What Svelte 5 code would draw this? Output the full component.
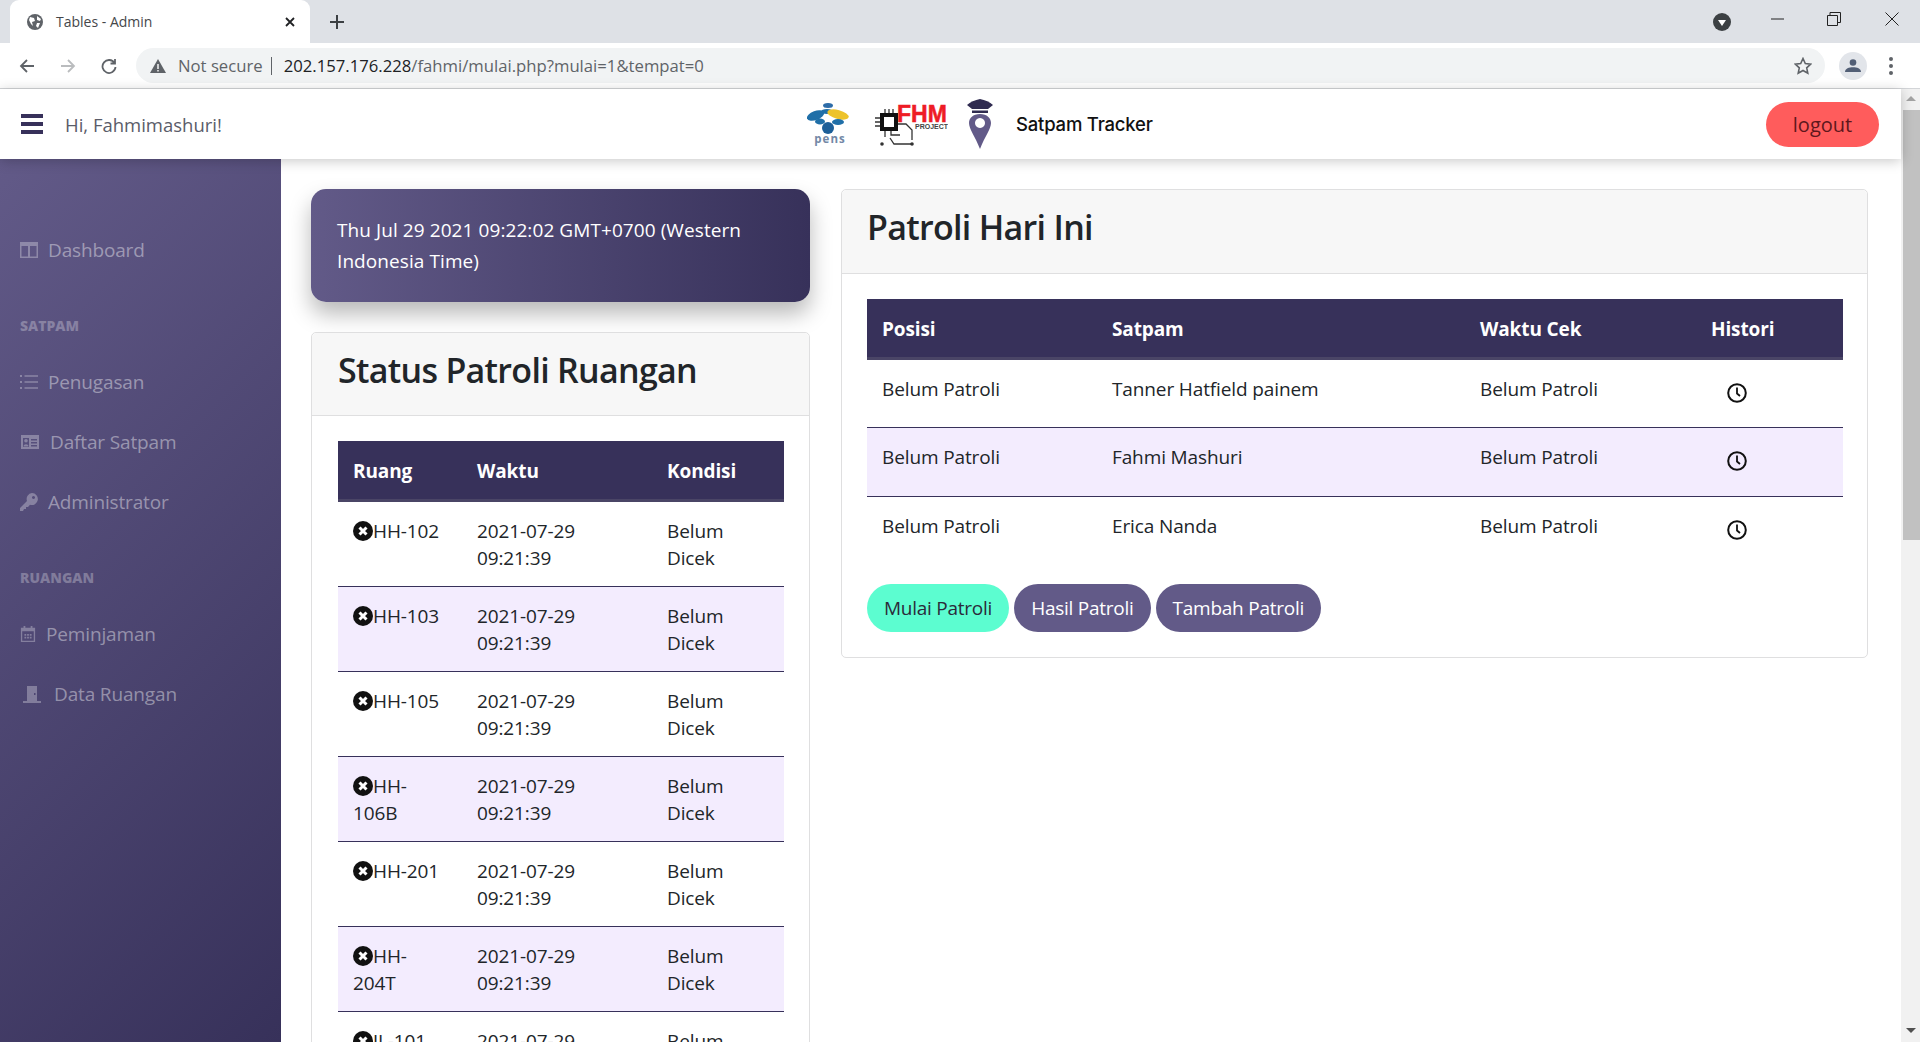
<script>
    const sideGroups = [
        { items: [{ icon: "board", label: "Dashboard" }] },
        { title: "SATPAM", items: [
            { icon: "list", label: "Penugasan" },
            { icon: "idcard", label: "Daftar Satpam" },
            { icon: "key", label: "Administrator" }
        ] },
        { title: "RUANGAN", items: [
            { icon: "cal", label: "Peminjaman" },
            { icon: "door", label: "Data Ruangan" }
        ] }
    ];

    const rooms = ["HH-102", "HH-103", "HH-105", "HH-106B", "HH-201", "HH-204T", "JL-101"];
    const patrols = ["Tanner Hatfield painem", "Fahmi Mashuri", "Erica Nanda"];
</script>

<div class="window">
    <div class="tabstrip">
        <div class="tab">
            <svg class="globe" viewBox="0 0 16 16"><circle cx="8" cy="8" r="8" fill="#5f6368"/><path d="M3 3l4 1 1 3-3 1 1 4-2-2-2-4zM10 2l4 3-1 2-3-1zM10 9l3 0-2 5-2-2z" fill="#fff"/></svg>
            <span class="tabtitle">Tables - Admin</span>
            <svg class="tabx" viewBox="0 0 12 12"><path d="M2 2l8 8M10 2l-8 8" stroke="#202124" stroke-width="1.8"/></svg>
        </div>
        <svg class="newtab" viewBox="0 0 16 16"><path d="M8 1v14M1 8h14" stroke="#3c4043" stroke-width="2"/></svg>
        <div class="spacer"></div>
        <svg class="dropdown" viewBox="0 0 18 18"><circle cx="9" cy="9" r="9" fill="#3c4043"/><path d="M5 7h8l-4 6z" fill="#fff"/></svg>
        <svg class="winbtn" viewBox="0 0 14 14"><path d="M0 7h13" stroke="#222" stroke-width="1"/></svg>
        <svg class="winbtn restore" viewBox="0 0 14 14"><path d="M.5 3.500h10v10H.5zM3 3.500V.5h10.500v10h-3" fill="none" stroke="#222"/></svg>
        <svg class="winbtn last" viewBox="0 0 14 14"><path d="M.5.500l13 13M13.500.500l-13 13" stroke="#222"/></svg>
    </div>
    <div class="toolbar">
        <svg class="navicon" viewBox="0 0 16 16"><path d="M15 8H2M8 2L2 8l6 6" fill="none" stroke="#5f6368" stroke-width="1.800"/></svg>
        <svg class="navicon" viewBox="0 0 16 16"><path d="M1 8h13M8 2l6 6-6 6" fill="none" stroke="#babcbe" stroke-width="1.800"/></svg>
        <svg class="navicon" viewBox="0 0 16 16"><path d="M13.500 5A6.500 6.500 0 1 0 14.500 9M14 1v4.500H9.500" fill="none" stroke="#5f6368" stroke-width="1.800"/></svg>
        <div class="omnibox">
            <svg class="warn" viewBox="0 0 16 14"><path d="M8 0l8 14H0z" fill="#5f6368"/><path d="M7.300 5h1.400v5H7.300zM7.300 11h1.400v1.500H7.300z" fill="#fff"/></svg>
            <span class="insecure">Not secure</span>
            <span class="divider"></span>
            <span class="url"><b>202.157.176.228</b>/fahmi/mulai.php?mulai=1&amp;tempat=0</span>
            <div class="spacer"></div>
            <svg class="star" viewBox="0 0 18 18"><path d="M9 1.500l2.300 5 5.400.6-4 3.700 1.100 5.400L9 13.500l-4.800 2.700 1.100-5.400-4-3.700 5.400-.6z" fill="none" stroke="#5f6368" stroke-width="1.600"/></svg>
        </div>
        <div class="avatar">
            <svg viewBox="0 0 16 16"><circle cx="8" cy="4.500" r="3.300" fill="#525f76"/><path d="M0 14c0-3.500 4-4.700 8-4.700s8 1.200 8 4.700z" fill="#525f76"/></svg>
        </div>
        <div class="kebab"><i></i><i></i><i></i></div>
    </div>

    <div class="viewport">
        <div class="page">
            <header class="topbar">
                <div class="greeting">
                    <div class="burger"><i></i><i></i><i></i></div>
                    <span class="hello">Hi, Fahmimashuri!</span>
                </div>
                <div class="brand">
                    <svg class="logo-pens" viewBox="0 0 43 43">
                        <ellipse cx="21" cy="2.500" rx="5" ry="2.500" fill="#2d6ca8"/>
                        <ellipse cx="8.500" cy="12.500" rx="9" ry="4.500" fill="#1f6fa8" transform="rotate(-20 8.500 12.500)"/>
                        <ellipse cx="20" cy="8.500" rx="6" ry="2.500" fill="#1f6fa8"/>
                        <ellipse cx="31" cy="11.500" rx="11" ry="4.500" fill="#edc32b" transform="rotate(15 31 11.500)"/>
                        <ellipse cx="13" cy="18.500" rx="5" ry="3" fill="#1f6fa8"/>
                        <ellipse cx="31" cy="19" rx="6" ry="3" fill="#1f6fa8"/>
                        <circle cx="21" cy="25" r="6" fill="#1d5f98"/>
                        <text x="23" y="39.500" class="pens-text">pens</text>
                    </svg>
                    <svg class="logo-fhm" viewBox="0 0 74 48">
                        <rect x="8" y="15" width="14" height="14" fill="none" stroke="#111" stroke-width="4"/>
                        <path d="M1 18h5M1 22h5M1 26h5M11 9v4M15 9v4M19 9v4M11 31v6M17 31v4h9M24 24h8l6 6v10M16 38l4 6h19" fill="none" stroke="#333" stroke-width="1.300"/>
                        <circle cx="8" cy="44" r="1.800" fill="#333"/>
                        <circle cx="38" cy="44" r="1.800" fill="#333"/>
                        <text x="23" y="22" class="fhm-text">FHM</text>
                        <text x="41" y="29" class="project-text">PROJECT</text>
                    </svg>
                    <svg class="logo-pin" viewBox="0 0 26 50">
                        <path d="M13 0C8 1 3 3 0 6l5 4h16l5-4C23 3 18 1 13 0z" fill="#2f2b50"/>
                        <path d="M5 11.500h16V14H5z" fill="#2f2b50"/>
                        <path fill-rule="evenodd" d="M13 15C6 15 2 19 2 24c0 6 6 13 11 26 5-13 11-20 11-26 0-5-4-9-11-9zM13 19a5 5 0 1 0 .01 0z" fill="#625a88"/>
                    </svg>
                    <span class="brand-name">Satpam Tracker</span>
                </div>
                <button class="logout">logout</button>
            </header>

            <div class="below">
                <aside class="sidebar">
                    {#each sideGroups as group}
                        {#if group.title}<div class="sidetitle">{group.title}</div>{/if}
                        {#each group.items as item}
                            <div class="sideitem">
                                <svg class="sideicon {item.icon}" viewBox="0 0 18 18">
                                    {#if item.icon === "board"}
                                        <path fill-rule="evenodd" d="M0 1h18v16H0zM1.500 5v10.500h6.500V5zM10 5v10.500h6.500V5z"/>
                                    {:else if item.icon === "list"}
                                        <path d="M0 2h2v2H0zM0 8h2v2H0zM0 14h2v2H0zM4.500 2.300H18v1.400H4.500zM4.500 8.300H18v1.400H4.500zM4.500 14.300H18v1.400H4.500z"/>
                                    {:else if item.icon === "idcard"}
                                        <path fill-rule="evenodd" d="M0 2h18v14H0zM2 5v9h6V5zM10 6v1.500h6V6zM10 9v1.500h6V9zM10 12v1.500h6V12z"/>
                                        <circle cx="5" cy="7.800" r="1.800"/><path d="M2.500 13.500c0-3 5-3 5 0z"/>
                                    {:else if item.icon === "key"}
                                        <path fill-rule="evenodd" d="M12 0a6 6 0 1 1-2 11.700L8 14H6v2H4l-1 2H0v-3l7-7A6 6 0 0 1 12 0zM13.500 3a1.500 1.500 0 1 0 .01 0z"/>
                                    {:else if item.icon === "cal"}
                                        <path fill-rule="evenodd" d="M1 2h3V0h2v2h6V0h2v2h3v16H1zM2.500 6v10.500h13V6zM5 9h2v2H5zM8 9h2v2H8zM11 9h2v2h-2zM5 12h2v2H5zM8 12h2v2H8zM11 12h2v2h-2z"/>
                                    {:else}
                                        <path fill-rule="evenodd" d="M4 1h10v15h4v2H0v-2h4zM11 8v2h1.500V8z"/>
                                    {/if}
                                </svg>
                                <span>{item.label}</span>
                            </div>
                        {/each}
                    {/each}
                </aside>

                <main class="content">
                    <section class="leftcol">
                        <div class="clock">Thu Jul 29 2021 09:22:02 GMT+0700 (Western Indonesia Time)</div>
                        <div class="card status">
                            <div class="cardhead"><h2>Status Patroli Ruangan</h2></div>
                            <div class="cardbody">
                                <table class="rooms">
                                    <thead><tr><th class="c-ruang">Ruang</th><th class="c-waktu">Waktu</th><th>Kondisi</th></tr></thead>
                                    <tbody>
                                        {#each rooms as room}
                                            <tr>
                                                <td><svg class="xmark" viewBox="0 0 20 20"><circle cx="10" cy="10" r="10" fill="#111"/><path d="M6.500 6.500l7 7M13.500 6.500l-7 7" stroke="#fff" stroke-width="3"/></svg>{room}</td>
                                                <td>2021-07-29 09:21:39</td>
                                                <td>Belum Dicek</td>
                                            </tr>
                                        {/each}
                                    </tbody>
                                </table>
                            </div>
                        </div>
                    </section>

                    <section class="rightcol">
                        <div class="card">
                            <div class="cardhead"><h2>Patroli Hari Ini</h2></div>
                            <div class="cardbody">
                                <table class="today">
                                    <thead><tr><th class="c-posisi">Posisi</th><th class="c-satpam">Satpam</th><th class="c-cek">Waktu Cek</th><th>Histori</th></tr></thead>
                                    <tbody>
                                        {#each patrols as name}
                                            <tr>
                                                <td>Belum Patroli</td>
                                                <td>{name}</td>
                                                <td>Belum Patroli</td>
                                                <td><svg class="clockicon" viewBox="0 0 20 20"><circle cx="10" cy="10" r="8.800" fill="none" stroke="#111" stroke-width="2"/><path d="M10 4.500V10.500l3 2.500" fill="none" stroke="#111" stroke-width="1.800"/></svg></td>
                                            </tr>
                                        {/each}
                                    </tbody>
                                </table>
                                <div class="actions">
                                    <button class="pill mint">Mulai Patroli</button>
                                    <button class="pill">Hasil Patroli</button>
                                    <button class="pill">Tambah Patroli</button>
                                </div>
                            </div>
                        </div>
                    </section>
                </main>
            </div>
        </div>

        <div class="scrollbar">
            <div class="arrow up"></div>
            <div class="thumb"></div>
            <div class="spacer"></div>
            <div class="arrow down"></div>
        </div>
    </div>
</div>

<style>
    :global(body) {
        margin: 0;
        overflow: hidden;
        background: #fff;
    }

    .window {
        height: 1042px;
        display: flex;
        flex-direction: column;
        overflow: hidden;
        font-family: "Open Sans", "Noto Sans", sans-serif;
        color: #212529;
    }

    .spacer { flex: 1; }

    /* browser chrome */
    .tabstrip {
        height: 43px;
        flex: none;
        background: #dee1e6;
        display: flex;
        align-items: center;
        padding-left: 10px;
    }
    .tab {
        width: 300px;
        height: 43px;
        box-sizing: border-box;
        padding: 0 14px 0 17px;
        background: #fff;
        border-radius: 9px 9px 0 0;
        display: flex;
        align-items: center;
        gap: 13px;
    }
    .globe { width: 16px; height: 16px; }
    .tabtitle { flex: 1; font-size: 14px; color: #45474a; }
    .tabx { width: 12px; height: 12px; }
    .newtab { width: 16px; height: 16px; margin-left: 19px; }
    .dropdown { width: 18px; height: 18px; margin-right: 40px; margin-top: 1px; }
    .winbtn { width: 14px; height: 14px; margin-right: 42px; margin-top: -6px; }
    .winbtn.restore { margin-right: 44px; }
    .winbtn.last { margin-right: 21px; }

    .toolbar {
        height: 45px;
        flex: none;
        background: #fff;
        border-bottom: 1px solid #d3d5d8;
        display: flex;
        align-items: center;
        padding-left: 19px;
        gap: 25px;
    }
    .navicon { width: 16px; height: 16px; }
    .omnibox {
        width: 1689px;
        height: 35px;
        margin-left: -6px;
        padding: 0 13px 0 14px;
        box-sizing: border-box;
        border-radius: 18px;
        background: #f1f3f4;
        display: flex;
        align-items: center;
        font-size: 16.700px;
    }
    .warn { width: 16px; height: 14px; margin-right: 12px; }
    .insecure { color: #5f6368; }
    .divider { width: 1px; height: 18px; background: #5f6368; margin: 0 12px 0 8px; }
    .url { color: #5f6368; }
    .url b { font-weight: 400; color: #202124; }
    .star { width: 18px; height: 18px; }
    .avatar {
        width: 28px;
        height: 28px;
        border-radius: 50%;
        background: #e2e5ea;
        margin-left: -11px;
        display: flex;
        align-items: center;
        justify-content: center;
    }
    .avatar svg { width: 16px; height: 16px; }
    .kebab {
        margin-left: -3px;
        display: flex;
        flex-direction: column;
        gap: 3px;
    }
    .kebab i { width: 4px; height: 4px; border-radius: 50%; background: #5f6368; }

    /* page */
    .viewport {
        flex: 1;
        min-height: 0;
        display: flex;
    }
    .page {
        flex: 1;
        min-width: 0;
        display: flex;
        flex-direction: column;
    }
    .topbar {
        height: 70px;
        flex: none;
        position: relative;
        z-index: 2;
        background: #fff;
        box-shadow: 0 2px 12px rgba(0, 0, 0, 0.22);
        display: grid;
        grid-template-columns: 786px 1fr auto;
        align-items: center;
        padding: 0 22px 0 21px;
    }
    .greeting { display: flex; align-items: center; }
    .burger { display: flex; flex-direction: column; gap: 4px; width: 22px; }
    .burger i { height: 4px; background: #37315a; }
    .hello { margin-left: 22px; font-size: 18.500px; color: #5a5c69; margin-top: 1px; }
    .brand { display: flex; align-items: center; }
    .logo-pens { width: 43px; height: 43px; }
    .logo-fhm { width: 74px; height: 48px; margin-left: 24px; }
    .logo-pin { width: 26px; height: 50px; margin-left: 19px; }
    .pens-text { font: 700 11.500px "Open Sans", sans-serif; fill: #7388a6; text-anchor: middle; letter-spacing: 1px; }
    .fhm-text { font: 700 23px "Liberation Sans", sans-serif; fill: #ee1c25; stroke: #ee1c25; stroke-width: 0.5px; }
    .project-text { font: 700 7px "Liberation Sans", sans-serif; fill: #444; }
    .brand-name { margin-left: 23px; font: 500 18.500px "Inter", sans-serif; color: #111; letter-spacing: -0.2px; }
    .logout {
        width: 113px;
        height: 45px;
        border: none;
        border-radius: 23px;
        background: #ff5c5c;
        color: #5e171c;
        font: 400 20px "Open Sans", sans-serif;
        padding: 0;
    }

    .below {
        flex: 1;
        min-height: 0;
        display: flex;
    }
    .sidebar {
        width: 281px;
        flex: none;
        box-sizing: border-box;
        padding: 61px 20px 0;
        background: linear-gradient(135deg, #625a88 0%, #37315a 100%);
        color: rgba(255, 255, 255, 0.42);
        font-size: 19px;
        letter-spacing: -0.15px;
    }
    .sidetitle {
        font-size: 14px;
        font-weight: 800;
        letter-spacing: 0;
        box-sizing: border-box;
        height: 52px;
        padding-bottom: 2px;
        margin-top: 20px;
        display: flex;
        align-items: center;
        color: rgba(255, 255, 255, 0.28);
    }
    .sideitem {
        height: 60px;
        display: flex;
        align-items: center;
        gap: 10px;
    }
    .sideicon { width: 18px; height: 18px; fill: rgba(255, 255, 255, 0.3); flex: none; }
    .sideicon.idcard { width: 20px; }
    .sideicon.cal { width: 16px; }
    .sideicon.door { width: 24px; }

    .content {
        flex: 1;
        min-width: 0;
        overflow: hidden;
        display: flex;
        gap: 31px;
        padding: 30px 33px 0 30px;
        font-size: 19px;
    }
    .leftcol {
        width: 499px;
        flex: none;
        display: flex;
        flex-direction: column;
        gap: 30px;
    }
    .rightcol { flex: 1; min-width: 0; }
    .clock {
        flex: none;
        box-sizing: border-box;
        height: 113px;
        padding: 26px 26px 0;
        line-height: 30.500px;
        letter-spacing: 0.08px;
        border-radius: 15px;
        color: #fff;
        background: linear-gradient(90deg, #625a88, #37315a);
        box-shadow: 0 12px 22px rgba(0, 0, 0, 0.28);
    }
    .card {
        border: 1px solid #dfdfe0;
        border-radius: 5px;
        background: #fff;
        flex: none;
    }
    .cardhead {
        height: 84px;
        box-sizing: border-box;
        padding: 0 25px;
        background: #f7f7f7;
        border-bottom: 1px solid #dfdfe0;
        display: flex;
        align-items: center;
        border-radius: 5px 5px 0 0;
    }
    .status .cardhead { height: 83px; padding-left: 26px; }
    h2 {
        margin: -9px 0 0;
        font-size: 34px;
        font-weight: 600;
        letter-spacing: -0.7px;
        color: #212529;
    }
    .status h2 { margin-top: -8px; }
    .cardbody { padding: 25px 24px 25px 25px; }
    .status .cardbody { padding: 25px 25px 25px 26px; }
    table {
        width: 100%;
        border-collapse: collapse;
        table-layout: fixed;
        line-height: 27px;
        letter-spacing: -0.12px;
        color: #212529;
    }
    th {
        background: #37315a;
        color: #fff;
        text-align: left;
        font-weight: 700;
        padding: 4px 15px 0;
        border-bottom: 3px solid #4a4566;
        height: 59px;
        box-sizing: border-box;
    }
    td {
        padding: 16px 15px 14px;
        vertical-align: top;
        border-top: 1px solid #37315a;
        box-sizing: border-box;
    }
    tbody tr:first-child td { border-top: none; }
    tbody tr:nth-child(even) td { background: #f3ecfe; }
    .rooms td { height: 85px; }
    .rooms td:last-child { padding-right: 40px; }
    .today td { height: 69px; }
    .c-ruang { width: 124px; }
    .c-waktu { width: 190px; }
    .c-posisi { width: 230px; }
    .c-satpam { width: 368px; }
    .c-cek { width: 231px; }
    .xmark {
        width: 20px;
        height: 20px;
        vertical-align: -3px;
    }
    .clockicon { width: 20px; height: 20px; margin: 7px 0 0 16px; display: block; }
    .actions {
        display: flex;
        gap: 5px;
        margin-top: 19px;
    }
    .pill {
        height: 48px;
        border: none;
        border-radius: 24px;
        padding: 0 17px;
        font: 400 19px "Open Sans", sans-serif;
        letter-spacing: -0.25px;
        color: #fff;
        background: #625a88;
    }
    .pill.mint { background: #5cfdd0; color: #2b2b3a; }

    .scrollbar {
        width: 19px;
        flex: none;
        background: #f1f1f1;
        display: flex;
        flex-direction: column;
    }
    .thumb { height: 430px; background: #c1c1c1; margin-left: 2px; }
    .arrow { height: 21px; position: relative; }
    .arrow::after {
        content: "";
        position: absolute;
        left: 5px;
        top: 7px;
        border-left: 5px solid transparent;
        border-right: 5px solid transparent;
    }
    .arrow.up::after { border-bottom: 5px solid #a3a3a3; }
    .arrow.down::after { border-top: 5px solid #505050; }
</style>
